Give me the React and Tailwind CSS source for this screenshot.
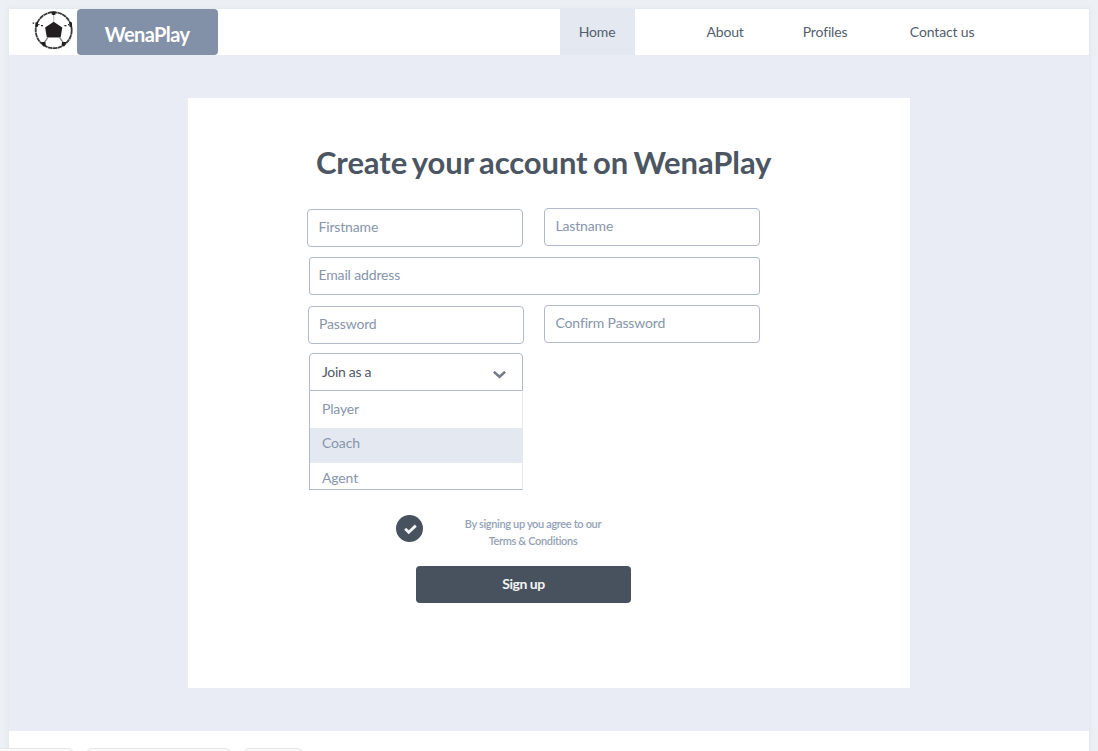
import React from "react";

const NAV = [
  { label: "Home", box: "w-[75px] bg-[#e4e8f1]" },
  { label: "About", box: "ml-[53px] w-[75px]" },
  { label: "Profiles", box: "ml-[25px] w-[75px]" },
  { label: "Contact us", box: "ml-[42px] w-[75px]" },
];

function Ball() {
  return (
    <svg className="ml-[23px] mt-px size-[42px] shrink-0" viewBox="0 0 42 42" fill="none">
      <circle cx="21.7" cy="20.2" r="18" stroke="#3a393b" strokeWidth="1.8" strokeDasharray="4.5 0.4" />
      <path d="M21.7 11.8L30.3 17.6L28.6 27.4H14.9L13.1 17.6Z" fill="#231f20" />
      <path d="M21.7 5V12" stroke="#b5b7ba" strokeWidth="1" />
      <path d="M15.6 27.8L12.4 32.4M27.8 27.8L31 32.4" stroke="#77797c" strokeWidth="1.2" />
      <path d="M19.8 1.4H23.6V4.6L21.7 5.2L19.8 4.6ZM3.4 12.5L6 11.8V16.6L3.4 17.6ZM37.4 11.8L40 12.5V17.6L37.4 16.6ZM9.2 32L13.4 32L13.8 35.6L11.2 36.4ZM30 32L34.2 32L32.2 36.4L29.6 35.6Z" fill="#231f20" />
      <path d="M6.2 14.6H7.4M9 15.6H11M32.4 15.6H34.4M36 14.6H37.2M0.6 13.2H2.2" stroke="#231f20" strokeWidth="1.2" />
    </svg>
  );
}

function Field({ label, className }) {
  return (
    <div className={`flex h-[38px] items-center border border-[#b1bacb] pb-[3px] text-[14px] tracking-[-0.15px] text-[#8795ab] ${className}`}>
      {label}
    </div>
  );
}

export default function App() {
  return (
    <div className="h-[751px] w-[1098px] overflow-hidden bg-[#edf1f6] pl-[8.6px] pt-[9px] font-['Lato',sans-serif]">
      <div className="flex h-[742px] w-[1080px] flex-col bg-white shadow-[0_0_5px_1px_#dfe5ed]">
        <header className="flex h-[46px] shrink-0">
          <Ball />
          <div className="ml-[3px] flex h-[46px] w-[141px] items-center justify-center rounded-[4px] bg-[#8291a7] pt-[3px] text-[20px] font-bold tracking-[-0.6px] text-white">
            WenaPlay
          </div>
          <nav className="ml-[342px] flex text-[14px] tracking-[-0.15px] text-[#535e6b]">
            {NAV.map((n) => (
              <div key={n.label} className={`flex items-center justify-center whitespace-nowrap pb-px ${n.box}`}>
                {n.label}
              </div>
            ))}
          </nav>
        </header>

        <main className="h-[676px] shrink-0 bg-[#e9ecf5] pl-[179px] pt-[43px]">
          <section className="h-[590px] w-[722px] bg-white pl-[119.4px] pt-[44px]">
            <h1 className="ml-[9px] h-[40px] whitespace-nowrap text-[31px] font-bold leading-[40px] tracking-[-0.08px] text-[#4b5662] [word-spacing:-2px]">
              Create your account on WenaPlay
            </h1>

            <div className="mt-[26px] flex h-[49px] w-[453px] justify-between">
              <Field label="Firstname" className="mt-px w-[216px] rounded-[4px] pl-[10.5px]" />
              <Field label="Lastname" className="w-[216px] rounded-[4px] pl-[10.5px]" />
            </div>
            <div className="h-[48px] pl-[2px]">
              <Field label="Email address" className="w-[451px] rounded-[3px] pl-[8.5px]" />
            </div>
            <div className="flex h-[48px] w-[453px] justify-between pl-px">
              <Field label="Password" className="mt-px w-[216px] rounded-[4px] pl-[10px]" />
              <Field label="Confirm Password" className="w-[216px] rounded-[4px] pl-[10.5px]" />
            </div>

            <div className="ml-[2px] w-[214px] text-[14px] tracking-[-0.15px] text-[#8795ab]">
              <div className="flex h-[38px] items-center justify-between rounded-t-[4px] border border-[#b1bacb] pb-px pl-[12px] pr-[16px] tracking-[-0.3px] text-[#4f5966]">
                Join as a
                <svg className="mt-[6px] h-[8px] w-[13px]" viewBox="0 0 13 8" fill="none">
                  <path d="M0.8 0.8L6.5 5.8L12.2 0.8" stroke="#737c86" strokeWidth="2.6" />
                </svg>
              </div>
              <div className="h-[99px] overflow-hidden border-b border-l border-r border-b-[#b1bacb] border-l-[#b1bacb] border-r-[#e5e8ee]">
                <div className="flex h-[37px] items-center pb-[2px] pl-[12px]">Player</div>
                <div className="flex h-[35px] items-center bg-[#e4e8f1] pb-[6px] pl-[12px]">Coach</div>
                <div className="flex h-[35px] items-center pb-[6px] pl-[12px]">Agent</div>
              </div>
            </div>

            <div className="mt-[25px] flex h-[51px] pl-[89px]">
              <div className="flex size-[27px] items-center justify-center rounded-full bg-[#48525e]">
                <svg className="ml-[2px] mt-[2px] h-[11px] w-[13px]" viewBox="0 0 13 11" fill="none">
                  <path d="M1.2 4.8L4.7 8.2L11.8 1.6" stroke="#f3f4f5" strokeWidth="2.8" />
                </svg>
              </div>
              <p className="ml-[30px] w-[160px] text-center text-[11px] font-semibold leading-[17px] tracking-[-0.35px] text-[#93a1b5]">
                By signing up you agree to our
                <br />
                Terms &amp; Conditions
              </p>
            </div>
            <button className="ml-[109px] flex h-[37px] w-[215px] items-center justify-center rounded-[4px] bg-[#48525e] pb-[3px] text-[14px] font-bold tracking-[-0.5px] text-[#f2f3f4]">
              Sign up
            </button>
          </section>
        </main>

        <footer className="flex h-[20px] items-start pt-[17px]">
          <div className="-ml-[19px] h-[20px] w-[83px] shrink-0 rounded-[4px] border border-[#e6e7e9] bg-[#fafafa]" />
          <div className="ml-[14px] h-[20px] w-[143px] shrink-0 rounded-[4px] border border-[#e6e7e9] bg-[#fafafa]" />
          <div className="ml-[14px] h-[20px] w-[58px] shrink-0 rounded-[4px] border border-[#e6e7e9] bg-[#fafafa]" />
        </footer>
      </div>
    </div>
  );
}
